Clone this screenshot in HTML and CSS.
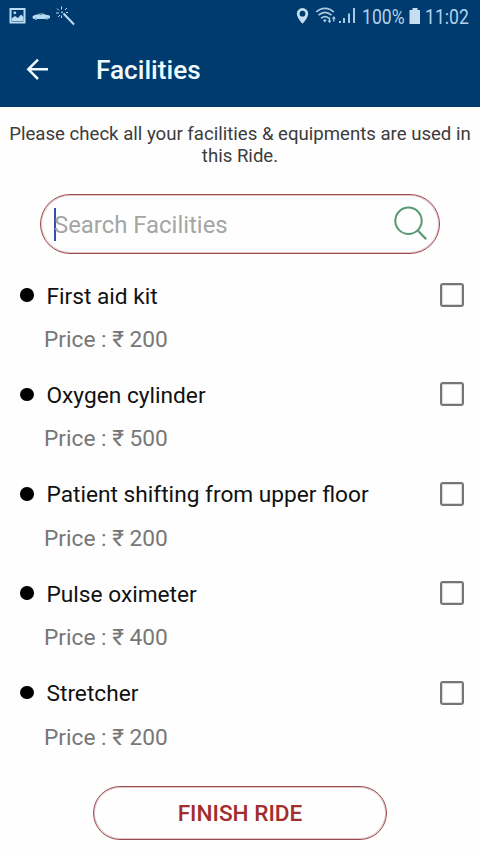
FILE: index.html
```html
<!DOCTYPE html>
<html lang="en">
<head>
<meta charset="utf-8">
<title>Facilities</title>
<link rel="stylesheet" href="styles.css">
</head>
<body>
<div class="screen">
  <header class="header">
    <div class="status">
      <svg class="status-left" width="80" height="34" viewBox="0 0 80 34">
        <path fill="#b9dcf3" fill-rule="evenodd" d="M9.500 8h16v15.500h-16zM11.500 10v11.500h12v-11.500z"/>
        <path fill="#b9dcf3" d="M11.500 21v-2.500l3.500-2.500 3 2 3-3.500 2.500 2.500v4z"/>
        <circle cx="14.800" cy="12.800" r="1.400" fill="#b9dcf3"/>
        <path fill="#b9dcf3" d="M32.500 17c0-1.500 3-2.200 5-2.500 2-1.500 6-1.500 8 .3 2.500.2 4.500.5 4.500 1.800v1.500l-2.500.8h-2l-7 .2h-3c-2 0-3-.5-3-2.100z"/>
        <path fill="#08467c" d="M38 14.800c1.500-.7 4-.7 5.200.2z"/>
        <circle cx="36" cy="18.700" r="1.200" fill="#8db5d2"/><circle cx="46.500" cy="18.500" r="1.200" fill="#8db5d2"/>
        <path stroke="#b9dcf3" stroke-width="2" d="M63.500 13.500l10.500 11"/>
        <path stroke="#b9dcf3" stroke-width="1" d="M61.500 6.500v3M57 8.500l2 2M67 8l-2 2M56 13h3M58 17l2-2M61.500 15.500v2.500M66 12.500h2"/>
        <circle cx="62" cy="12.300" r=".9" fill="#b9dcf3"/>
      </svg>
      <div class="status-right">
        <svg width="64" height="34" viewBox="0 0 64 34">
          <path fill="#c5def0" fill-rule="evenodd" d="M7.500 8a5.700 5.700 0 0 0-5.700 5.700c0 4 5.700 10 5.700 10s5.700-6 5.700-10A5.700 5.700 0 0 0 7.500 8zm0 2.800a2.900 2.900 0 1 1 0 5.800 2.900 2.900 0 0 1 0-5.800z"/>
          <g fill="none" stroke="#a9c9e1" stroke-width="1.700"><path d="M21.200 12c5.200-4.800 12.400-4.800 17.600 0M23.500 15.200c4-3.600 8.900-3.600 13 0M26 18.300c2.500-2 5.500-2 8 0"/></g>
          <path fill="#a9c9e1" d="M28 20.200l2-1.200 1.500 1.200-1.700 2.300zM32.500 20.500h1.300v-3h1.400v3h1.300l-2 2.700zM36.800 18.800l2-2.700 2 2.700h-1.300v2.700h-1.400v-2.700z"/>
          <path fill="#a9c9e1" d="M44 21h2v2h-2zM48 18h2v5h-2zM53 13.500h2v9.500h-2zM58 8h2v15h-2z"/>
        </svg>
        <span class="battery-text"><span class="narrow">100%</span></span>
        <svg class="battery" width="12" height="34" viewBox="0 0 12 34"><path fill="#c5def0" d="M3.500 8h5v2h2.500v14h-10.500v-14h3z"/></svg>
        <span class="clock"><span class="narrow">11:02</span></span>
      </div>
    </div>
    <div class="toolbar">
      <svg class="back" width="24" height="24" viewBox="0 0 24 24" fill="none" stroke="#eefaff" stroke-width="2.500"><path d="M23 11.300H3.500M13 1.700L3.300 11.300l9.700 9.700"/></svg>
      <h1 class="title">Facilities</h1>
    </div>
  </header>
  <main class="content">
    <p class="notice">Please check all your facilities &amp; equipments are used in<br>this Ride.</p>
    <div class="search">
      <span class="caret"></span>
      <span class="placeholder">Search Facilities</span>
      <svg class="magnifier" width="36" height="36" viewBox="0 0 36 36" fill="none" stroke="#599a75"><circle cx="16.500" cy="14.800" r="13.200" stroke-width="2"/><path d="M25.500 24.200l8.700 9" stroke-width="2.300"/></svg>
    </div>
    <ul class="list">
      <li class="item"><div class="row"><span class="dot"></span><span class="name">First aid kit</span><span class="box"></span></div><div class="price">Price : ₹ 200</div></li>
      <li class="item"><div class="row"><span class="dot"></span><span class="name">Oxygen cylinder</span><span class="box"></span></div><div class="price">Price : ₹ 500</div></li>
      <li class="item"><div class="row"><span class="dot"></span><span class="name">Patient shifting from upper floor</span><span class="box"></span></div><div class="price">Price : ₹ 200</div></li>
      <li class="item"><div class="row"><span class="dot"></span><span class="name">Pulse oximeter</span><span class="box"></span></div><div class="price">Price : ₹ 400</div></li>
      <li class="item"><div class="row"><span class="dot"></span><span class="name">Stretcher</span><span class="box"></span></div><div class="price">Price : ₹ 200</div></li>
    </ul>
    <button class="finish">FINISH RIDE</button>
  </main>
</div>
</body>
</html>
```
FILE: styles.css
```css
* { box-sizing: border-box; }
body { margin: 0; background: #fefefe; font-family: Roboto, "Noto Sans", sans-serif; }
.screen { width: 480px; height: 853px; overflow: hidden; display: flex; flex-direction: column; }
.header { height: 106.500px; flex: none; background: #003b6f; }
.status { height: 34px; display: flex; justify-content: space-between; color: #b4d1e8; }
.status svg { display: block; flex: none; }
.status-right { display: flex; width: 185px; line-height: 34px; font-size: 20px; white-space: nowrap; }
.narrow { display: inline-block; transform: scaleX(.88); transform-origin: left center; }
.battery-text { width: 46px; margin-left: 3px; }
.battery { margin-left: 1px; }
.clock { margin-left: 4px; }
.toolbar { height: 72px; display: flex; align-items: center; padding-left: 25px; }
.title { margin: 0 0 0 47px; color: #f0fbff; font-size: 26.200px; font-weight: 500; line-height: 34px; }
.content { flex: 1; display: flex; flex-direction: column; }
.notice { margin: 16px 0 0; height: 44px; font-size: 18.600px; line-height: 22px; color: #3c3c3c; text-align: center; white-space: nowrap; }
.search { height: 60px; margin: 27.500px 40px 0; border: 1px solid #9c4a4f; box-shadow: inset 0 0 0 1px rgba(156, 74, 79, .3); border-radius: 30px; display: flex; align-items: center; padding: 0 11px 0 12.500px; }
.caret { width: 2.500px; height: 33px; background: #344faa; margin-right: -2px; }
.placeholder { flex: 1; padding-top: 2px; font-size: 23.900px; color: #a5a5a5; white-space: nowrap; }
.list { margin: 16px 0 0; padding: 0; list-style: none; }
.item { height: 99.400px; }
.row { height: 50px; display: flex; align-items: center; padding: 0 16px 0 20px; }
.dot { width: 13.500px; height: 13.500px; border-radius: 50%; background: #000; margin-right: 13px; }
.name { flex: 1; padding-top: 3px; font-size: 22.700px; line-height: 28px; color: #111; white-space: nowrap; }
.box { width: 24px; height: 24px; border: 2px solid #757575; box-shadow: inset 0 0 0 1px rgba(117, 117, 117, .25); border-radius: 3px; }
.price { padding-left: 44px; font-size: 22.700px; line-height: 28px; margin-top: 6px; color: #777; white-space: nowrap; }
.finish { width: 294px; height: 54px; margin: 19px 0 0 93px; padding: 2px 0 0; border: 1px solid #9c4a4f; box-shadow: inset 0 0 0 1px rgba(156, 74, 79, .3); border-radius: 27px; background: none; font: 500 22.600px Roboto, sans-serif; color: #a12d2d; }
```
